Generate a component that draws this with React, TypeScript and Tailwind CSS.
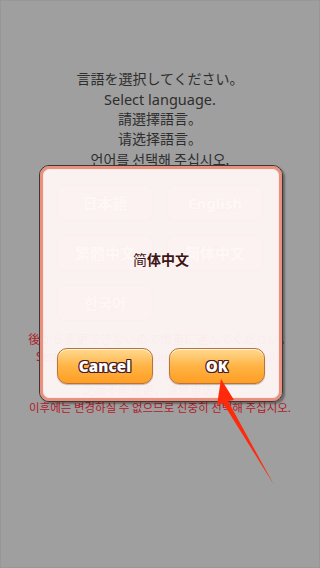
import React from 'react';

const font = { fontFamily: '"Noto Sans", "Noto Sans CJK JP", sans-serif' };

const outline =
  '[text-shadow:1px_0_0_#4a1c1c,-1px_0_0_#4a1c1c,0_1px_0_#4a1c1c,0_-1px_0_#4a1c1c,1px_1px_0_#4a1c1c,-1px_-1px_0_#4a1c1c,1px_-1px_0_#4a1c1c,-1px_1px_0_#4a1c1c]';

const languages = ['日本語', 'English', '繁體中文', '简体中文', '한국어'];

function OrangeButton({ label }: { label: string }) {
  return (
    <button
      className={
        'flex-1 h-[36px] rounded-[10px] border border-[#b8743a] bg-gradient-to-b from-[#ffd98e] via-[#ffb444] to-[#ff9d22] shadow-[inset_0_1px_0_#fff3d6,0_1px_1px_rgba(0,0,0,0.25)] text-white text-[15px] font-extrabold tracking-[0.2px] ' +
        outline
      }
      style={{ fontFamily: '"Open Sans", "Noto Sans", sans-serif' }}
    >
      {label}
    </button>
  );
}

export default function App() {
  return (
    <div
      className="relative w-[320px] h-[568px] overflow-hidden bg-[#9f9f9f] border border-[#979797]"
      style={font}
    >
      {/* 言語選択画面（背面） */}
      <div className="pt-[68px] text-center text-[14px] leading-[20px] text-[#2e2e2e]">
        <p>言語を選択してください。</p>
        <p className="text-[14.5px]">Select language.</p>
        <p>請選擇語言。</p>
        <p>请选择語言。</p>
        <p style={{ fontFamily: '"Noto Sans CJK KR", sans-serif' }}>언어를 선택해 주십시오.</p>
      </div>

      <div aria-hidden className="mt-[16px] mx-auto w-[206px] grid grid-cols-2 gap-[14px]">
        {languages.map((l) => (
          <div
            key={l}
            className="h-[36px] rounded-[8px] border border-[#7a6060] bg-[#aaa2a2] flex items-center justify-center text-white text-[15px] font-bold [text-shadow:0_0_2px_#6a4a4a]"
          >
            {l}
          </div>
        ))}
      </div>

      <div className="mt-[10px] text-center text-[12px] leading-[17px] text-[#b0202a]">
        <p>後から変更できないので慎重に選んでください。</p>
        <p>Setting cannot be undone. Choose carefully.</p>
        <p aria-hidden>之後無法變更，請慎重選擇。</p>
        <p aria-hidden>之后不能变更，请慎重选择。</p>
        <p className="text-[11.5px]" style={{ fontFamily: '"Noto Sans CJK KR", sans-serif' }}>
          이후에는 변경하실 수 없으므로 신중히 선택해 주십시오.
        </p>
      </div>

      {/* 確認ダイアログ */}
      <div className="absolute left-[38px] top-[164px] w-[244px] h-[237px] rounded-[10px] border border-[#3e3634] shadow-[2px_2px_2px_rgba(0,0,0,0.35)]">
        <div className="h-full rounded-[9px] border-[3px] border-[#e8917f]">
          <div className="h-full flex flex-col rounded-[6px] border border-[#fde6e3] bg-[#fff7f6]/[0.95]">
            <div className="flex-1 flex items-center justify-center text-[14px] font-bold text-[#3e1414]">
              <span className="font-normal">简</span>体中文
            </div>
            <div className="flex gap-[16px] px-[13px] pb-[13px]">
              <OrangeButton label="Cancel" />
              <OrangeButton label="OK" />
            </div>
          </div>
        </div>
      </div>

      {/* 赤い矢印 */}
      <svg className="absolute left-0 top-0" width="320" height="568" viewBox="0 0 320 568">
        <polygon points="220,378 233,399 227,400 273,484 222,402 216,404" fill="#ff2a0c" />
      </svg>
    </div>
  );
}
